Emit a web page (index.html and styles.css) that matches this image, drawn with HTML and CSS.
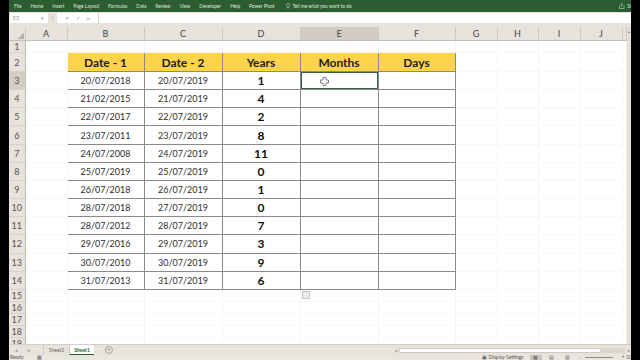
FILE: index.html
```html
<!DOCTYPE html>
<html>
<head>
  <title>Book1 - Excel</title>

  <!-- Spreadsheet window styling -->
  <link rel="stylesheet" href="styles.css">
</head>
<body>

  <div class="excel">

    <!-- Ribbon tab strip -->
    <div class="ribbon">
      <span>File</span>
      <span>Home</span>
      <span>Insert</span>
      <span>Page Layout</span>
      <span>Formulas</span>
      <span>Data</span>
      <span>Review</span>
      <span>View</span>
      <span>Developer</span>
      <span>Help</span>
      <span>Power Pivot</span>
      <span class="tell">
        <svg width="4" height="6" viewBox="0 0 4 6"><path d="M2 0.4a1.6 1.6 0 0 1 1 2.9v0.9H1v-0.9A1.6 1.6 0 0 1 2 0.4zM1.2 5h1.6" fill="none" stroke="#dfe9dc" stroke-width="0.5"/></svg>
        Tell me what you want to do
      </span>
      <span class="share">
        <svg width="6" height="6" viewBox="0 0 6 6"><path d="M0.5 2.5v3h4.5v-3M2.7 4V0.6M1.6 1.6l1.1-1.1 1.1 1.1" fill="none" stroke="#dfe9dc" stroke-width="0.5"/></svg>
        Share
      </span>
    </div>

    <!-- Name box and formula bar -->
    <div class="formula-row">
      <div class="name-box">E3<span class="caret">▾</span></div>
      <div class="dots">⋮</div>
      <div class="fx-box"><span>✕</span><span>✓</span><i>fx</i></div>
      <div class="formula-input"></div>
    </div>

    <!-- Worksheet grid, rows are built by the script below -->
    <div class="sheet-area">
      <table class="sheet" id="sheet"></table>
      <div class="vscroll"><span>▴</span></div>
    </div>

    <!-- Sheet tabs and horizontal scrollbar -->
    <div class="tabs-bar">
      <span class="nav-arrow">◂</span>
      <span class="nav-arrow">▸</span>
      <span class="tab">Sheet2</span>
      <span class="tab active">Sheet1</span>
      <span class="add-sheet">+</span>
      <div class="hscroll">
        <span class="arrow">◂</span>
        <div class="thumb"></div>
        <div class="track"></div>
        <span class="arrow">▸</span>
      </div>
    </div>

    <!-- Status bar -->
    <div class="status-bar">
      <span class="ready">Ready</span>
      <span class="macro">▦</span>
      <span class="display">▣ Display Settings</span>
      <span class="view current">▦</span>
      <span class="view">▤</span>
      <span class="view">▥</span>
      <span class="zoom">-</span>
      <span class="slider"></span>
      <span class="zoom">+</span>
      <span class="zoom-pct">100%</span>
    </div>
  </div>

  <script>
    // Column widths: row header, A..J, and the partly visible K
    const widths = [16, 42, 77, 78, 78, 78, 77, 42, 41, 42, 42, 4];
    const letters = ["", "A", "B", "C", "D", "E", "F", "G", "H", "I", "J", ""];

    // Table content of B2:F14
    const data = [
      ["Date - 1", "Date - 2", "Years", "Months", "Days"],
      ["20/07/2018", "20/07/2019", "1"],
      ["21/02/2015", "21/07/2019", "4"],
      ["22/07/2017", "22/07/2019", "2"],
      ["23/07/2011", "23/07/2019", "8"],
      ["24/07/2008", "24/07/2019", "11"],
      ["25/07/2019", "25/07/2019", "0"],
      ["26/07/2018", "26/07/2019", "1"],
      ["28/07/2018", "27/07/2019", "0"],
      ["28/07/2012", "28/07/2019", "7"],
      ["29/07/2016", "29/07/2019", "3"],
      ["30/07/2010", "30/07/2019", "9"],
      ["31/07/2013", "31/07/2019", "6"]
    ];

    const cursor = `<svg class="cursor" width="9" height="9" viewBox="0 0 9 9"><path d="M3 0.5h3v2.5h2.5v3H6v2.5H3V6H0.5V3H3z" fill="#fff" stroke="#555" stroke-width="0.7"/></svg>`;

    let html = "<colgroup>" + widths.map(w => `<col style="width:${w}px">`).join("") + "</colgroup>";

    // Column header row
    html += "<tr class='col-head'>";
    letters.forEach((l, i) => {
      const cls = i === 0 ? "corner" : (l === "E" ? "selected" : "");
      html += `<th class="${cls}">${l}</th>`;
    });
    html += "</tr>";

    // Rows 1..19
    for (let r = 1; r <= 19; r++) {
      let rowCls = "r-small";
      if (r === 2) rowCls = "r-head";
      else if (r >= 3 && r <= 14) rowCls = "r-data";
      else if (r === 19) rowCls = "r-last";

      html += `<tr class="${rowCls}"><th class="row-head${r === 3 ? " selected" : ""}">${r}</th>`;
      for (let c = 1; c < letters.length; c++) {
        let cls = "";
        let text = "";
        if (r >= 2 && r <= 14 && c >= 2 && c <= 6) {
          cls = r === 2 ? "tcell thead" : "tcell";
          text = data[r - 2][c - 2] || "";
          if (r > 2 && c === 4) cls += " num";
          if (r === 3 && c === 5) {
            cls += " active";
            text = cursor;
          }
        }
        if (r === 15 && c === 5) {
          cls = "qa-cell";
          text = "<span class='quick'></span>";
        }
        html += `<td class="${cls}">${text}</td>`;
      }
      html += "</tr>";
    }

    document.getElementById("sheet").innerHTML = html;
  </script>

</body>
</html>
```

FILE: styles.css
```css
/* Page frame: black bars on both sides of the window */
body {
  margin: 0;
  background-color: #000;
  font-family: "Lato", "Liberation Sans", sans-serif;
  overflow: hidden;
}

.excel {
  margin-left: 9px;
  width: 622px;
  height: 360px;
  background-color: #e7e2db;
  display: flex;
  flex-direction: column;
  overflow: hidden;
}

/* Ribbon tab strip */
.ribbon {
  height: 12px;
  background-color: #2c5d31;
  color: #dfe9dc;
  font-size: 4.8px;
  display: flex;
  align-items: center;
  gap: 9px;
  padding-left: 5px;
  white-space: nowrap;
}

.ribbon .tell {
  margin-left: 3px;
  display: flex;
  align-items: center;
  gap: 2px;
}

.ribbon .share {
  margin-left: auto;
  display: flex;
  align-items: center;
  gap: 2px;
  margin-right: -8px;
}

/* Name box and formula bar */
.formula-row {
  height: 15px;
  display: flex;
  align-items: flex-start;
  padding-top: 1px;
  box-sizing: border-box;
  font-size: 5px;
  color: #9a958e;
}

.name-box {
  width: 38px;
  height: 10px;
  margin-left: 1px;
  background-color: #fff;
  display: flex;
  align-items: center;
  justify-content: space-between;
  padding: 0 4px 0 3px;
  box-sizing: border-box;
}

.dots {
  width: 9px;
  text-align: center;
  line-height: 10px;
}

.fx-box {
  width: 42px;
  height: 10px;
  background-color: #fff;
  display: flex;
  align-items: center;
  justify-content: space-around;
  padding: 0 4px;
  box-sizing: border-box;
  border-right: 1px solid #d8d3cc;
}

.fx-box i {
  font-family: "Liberation Serif", serif;
}

.formula-input {
  flex: 1;
  height: 10px;
  background-color: #fff;
}

/* Worksheet area */
.sheet-area {
  height: 317px;
  display: flex;
  overflow: hidden;
}

.sheet {
  width: 617px;
  table-layout: fixed;
  border-collapse: collapse;
  background-color: #fff;
}

.sheet td,
.sheet th {
  padding: 0;
  overflow: hidden;
  white-space: nowrap;
  font-weight: normal;
}

.sheet td {
  border-right: 1px solid #f4f4f4;
  border-bottom: 1px solid #f8f8f8;
}

/* Column letters */
.col-head th {
  height: 13px;
  background-color: #e7e2db;
  color: #444;
  font-size: 9px;
  border-right: 1px solid #cfcac2;
  border-bottom: 1px solid #c2bdb5;
}

.col-head th.corner {
  background: linear-gradient(135deg, transparent 62%, #b4afa7 62%) no-repeat right 1px bottom 1px / 8px 8px, #e7e2db;
}

.sheet th.selected {
  background-color: #d2ccc3;
}

/* Row numbers */
.row-head {
  background-color: #e7e2db;
  color: #555;
  font-size: 9px;
  border-right: 1px solid #c2bdb5;
  border-bottom: 1px solid #d6d1c9;
}

.r-small { height: 12px; }
.r-head { height: 19px; }
.r-data { height: 18.17px; }
.r-last { height: 6px; }

/* Data table B2:F14 */
.sheet td.tcell {
  border: 1px solid #8a8a8a;
  text-align: center;
  font-size: 9px;
  color: #2e2e2e;
}

.sheet td.thead {
  background-color: #fdd44c;
  font-size: 12px;
  font-weight: bold;
  color: #1d1d1d;
}

.sheet td.num {
  font-size: 12px;
  font-weight: bold;
  color: #111;
}

.sheet td.active {
  box-shadow: inset 0 0 0 1px #3b5f43;
  text-align: left;
  padding-left: 19px;
  line-height: 0;
}

.cursor {
  margin-top: 1px;
}

/* Quick analysis marker under the table */
.qa-cell {
  vertical-align: top;
}

.quick {
  display: block;
  width: 6px;
  height: 6px;
  margin-top: 1px;
  margin-left: 1px;
  border: 1px solid #c4c4c4;
  background-color: #ececec;
}

/* Vertical scrollbar */
.vscroll {
  width: 5px;
  background-color: #e3ded7;
  font-size: 4px;
  color: #777;
  text-align: center;
  padding-top: 2px;
}

/* Sheet tabs */
.tabs-bar {
  height: 11px;
  display: flex;
  align-items: center;
  font-size: 5px;
  color: #9c978f;
  border-top: 1px solid #d3cec6;
  box-sizing: border-box;
}

.nav-arrow {
  width: 11px;
  text-align: center;
  margin-left: 2px;
}

.tab {
  width: 25px;
  height: 10px;
  line-height: 10px;
  text-align: center;
  color: #6d6a65;
  border-left: 1px solid #cdc8c0;
}

.nav-arrow + .tab {
  margin-left: 8px;
}

.tab.active {
  background-color: #fff;
  color: #2c5d31;
  font-weight: bold;
  border-bottom: 1px solid #2c5d31;
  box-sizing: border-box;
}

.add-sheet {
  width: 6px;
  height: 6px;
  line-height: 6px;
  margin-left: 11px;
  border: 1px solid #a9a49c;
  border-radius: 50%;
  text-align: center;
  color: #7c7871;
}

.hscroll {
  margin-left: auto;
  width: 238px;
  height: 6px;
  display: flex;
  align-items: center;
  gap: 1px;
}

.hscroll .arrow {
  width: 5px;
  font-size: 4px;
  color: #777;
  text-align: center;
}

.hscroll .thumb {
  width: 202px;
  height: 5px;
  background-color: #fff;
  border: 1px solid #cfcac2;
  box-sizing: border-box;
}

.hscroll .track {
  flex: 1;
  height: 5px;
  background-color: #dcd7cf;
}

/* Status bar */
.status-bar {
  height: 5px;
  display: flex;
  align-items: flex-start;
  font-size: 5px;
  line-height: 5px;
  color: #5a5753;
  background-color: #e9e5df;
  white-space: nowrap;
}

.ready {
  margin-left: 1px;
}

.macro {
  margin-left: 14px;
}

.display {
  margin-left: auto;
}

.view {
  width: 12px;
  text-align: center;
  margin-left: 4px;
}

.view.current {
  background-color: #cbc5bb;
  margin-left: 6px;
}

.zoom {
  margin-left: 6px;
}

.slider {
  width: 28px;
  height: 1px;
  margin: 2px 2px 0 4px;
  background-color: #8a8680;
}

.zoom-pct {
  margin-left: 2px;
  margin-right: -8px;
}
```
